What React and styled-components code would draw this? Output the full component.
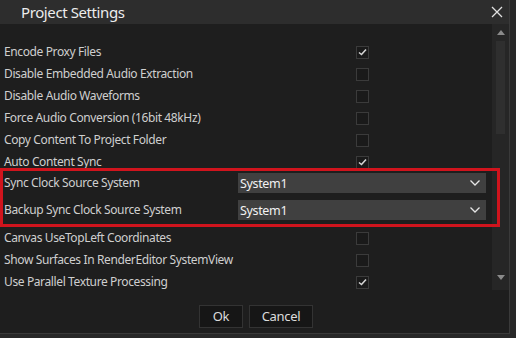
import React from 'react';
import styled, { createGlobalStyle } from 'styled-components';

const GlobalStyle = createGlobalStyle`
    html, body {
        margin: 0;
        padding: 0;
        background: #1b1b1b;
        font-family: "Noto Sans", "Open Sans", sans-serif;
    }
`

const Page = styled.div`
    width: 516px;
    height: 338px;
    overflow: hidden;
    background: #282828;
`

const Window = styled.div`
    width: 509px;
    height: 333px;
    display: flex;
    flex-direction: column;
    background: #1e1e1e;
    border-right: 1px solid #3a3a3a;
    border-bottom: 1px solid #3a3a3a;
`

const TitleBar = styled.div`
    height: 24px;
    flex: none;
    display: flex;
    align-items: center;
    justify-content: space-between;
    background: #2d2d2d;
    padding: 0 5px 0 21px;
`

const Title = styled.div`
    color: #ececec;
    font-size: 15px;
    letter-spacing: -0.4px;
    line-height: 24px;
`

const CloseButton = styled.div`
    width: 14px;
    height: 14px;
    display: flex;
    align-items: center;
    justify-content: center;
`

const Body = styled.div`
    height: 266px;
    flex: none;
    display: flex;
    overflow: hidden;
`

const Content = styled.div`
    flex: 1;
    padding-top: 17px;
`

const Row = styled.div`
    display: grid;
    grid-template-columns: 238px 248px;
    align-items: ${p => (p.$select ? 'start' : 'center')};
    height: ${p => (p.$select ? '27px' : '22px')};
`

const Label = styled.div`
    padding-left: 4px;
    color: #cfcfcf;
    font-size: 12px;
    letter-spacing: -0.38px;
    white-space: nowrap;
    line-height: ${p => (p.$select ? '20px' : '22px')};
`

const CheckCell = styled.div`
    display: flex;
    justify-content: center;
`

const Box = styled.div`
    width: 11px;
    height: 11px;
    border: 1px solid #3b3b3b;
    background: #1a1a1a;
    display: flex;
    align-items: center;
    justify-content: center;
`

const Select = styled.div`
    height: 20px;
    background: #404040;
    display: flex;
    align-items: center;
    justify-content: space-between;
    padding: 0 6px 0 2px;
    color: #f2f2f2;
    font-size: 12.5px;
    letter-spacing: -0.35px;
`

const Highlight = styled.div`
    position: relative;

    &::after {
        content: '';
        position: absolute;
        z-index: 1;
        left: 0;
        top: -5px;
        width: 500px;
        height: 59px;
        box-sizing: border-box;
        border: 3px solid #d0141d;
        pointer-events: none;
    }
`

const Scrollbar = styled.div`
    width: 17px;
    flex: none;
    background: #262626;
    display: flex;
    flex-direction: column;
    align-items: center;
    padding-top: 6px;
`

const Thumb = styled.div`
    width: 9px;
    height: 93px;
    margin-top: 6px;
    background: #2f2f2f;
`

const ArrowDown = styled.div`
    margin-top: auto;
    margin-bottom: 5px;
`

const Footer = styled.div`
    flex: 1;
    display: flex;
    justify-content: center;
    align-items: flex-start;
    gap: 6px;
    padding-top: 15px;
    padding-left: 3px;
`

const Button = styled.div`
    height: 21px;
    width: ${p => p.$width}px;
    text-align: center;
    background: #161616;
    border: 1px solid #333;
    color: #dcdcdc;
    font-size: 13px;
    letter-spacing: -0.3px;
    line-height: 21px;
`

const Check = () => (
    <svg width="9" height="8" viewBox="0 0 9 8">
        <polyline points="1,4.5 3.5,6.5 8,1.5" fill="none" stroke="#d4d4d4" strokeWidth="1.6" />
    </svg>
)

const Chevron = () => (
    <svg width="10" height="6" viewBox="0 0 10 6">
        <polyline points="0.5,0.5 5,5 9.5,0.5" fill="none" stroke="#e6e6e6" strokeWidth="1.3" />
    </svg>
)

const settings = [
    { name: 'Encode Proxy Files', checked: true },
    { name: 'Disable Embedded Audio Extraction', checked: false },
    { name: 'Disable Audio Waveforms', checked: false },
    { name: 'Force Audio Conversion (16bit 48kHz)', checked: false },
    { name: 'Copy Content To Project Folder', checked: false },
    { name: 'Auto Content Sync', checked: true },
]

const moreSettings = [
    { name: 'Canvas UseTopLeft Coordinates', checked: false },
    { name: 'Show Surfaces In RenderEditor SystemView', checked: false },
    { name: 'Use Parallel Texture Processing', checked: true },
]

const clockSettings = ['Sync Clock Source System', 'Backup Sync Clock Source System']

const CheckRow = ({ name, checked }) => (
    <Row>
        <Label>{name}</Label>
        <CheckCell>
            <Box>{checked && <Check />}</Box>
        </CheckCell>
    </Row>
)

export default function App() {
    return (
        <Page>
            <GlobalStyle />
            <Window>
                <TitleBar>
                    <Title>Project Settings</Title>
                    <CloseButton>
                        <svg width="12" height="12" viewBox="0 0 12 12">
                            <path d="M1 1 L11 11 M11 1 L1 11" stroke="#e0e0e0" strokeWidth="1.3" />
                        </svg>
                    </CloseButton>
                </TitleBar>
                <Body>
                    <Content>
                        {settings.map(s => <CheckRow key={s.name} {...s} />)}
                        <Highlight>
                            {clockSettings.map(name => (
                                <Row $select key={name}>
                                    <Label $select>{name}</Label>
                                    <Select>
                                        <span>System1</span>
                                        <Chevron />
                                    </Select>
                                </Row>
                            ))}
                        </Highlight>
                        {moreSettings.map(s => <CheckRow key={s.name} {...s} />)}
                    </Content>
                    <Scrollbar>
                        <svg width="8" height="5" viewBox="0 0 8 5">
                            <polygon points="0,5 4,0 8,5" fill="#8a8a8a" />
                        </svg>
                        <Thumb />
                        <ArrowDown>
                            <svg width="8" height="5" viewBox="0 0 8 5">
                                <polygon points="0,0 8,0 4,5" fill="#8a8a8a" />
                            </svg>
                        </ArrowDown>
                    </Scrollbar>
                </Body>
                <Footer>
                    <Button $width={42}>Ok</Button>
                    <Button $width={62}>Cancel</Button>
                </Footer>
            </Window>
        </Page>
    )
}
